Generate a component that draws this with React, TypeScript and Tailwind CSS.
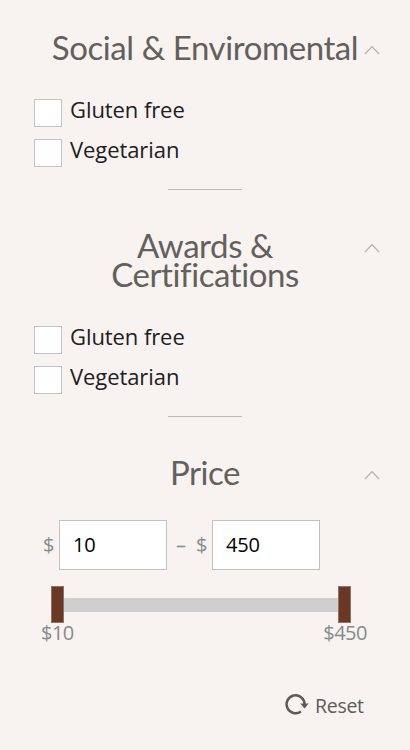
import React from "react";

function Chevron({ className }: { className: string }) {
  return (
    <svg className={`absolute right-[30px] h-[10px] w-[16px] ${className}`} viewBox="0 0 16 10" fill="none" stroke="#b3b0af" strokeWidth="1.2">
      <path d="M1 9 L8 1.6 L15 9" />
    </svg>
  );
}

function Heading({ children, chevron = "top-[12px]" }: { children: React.ReactNode; chevron?: string }) {
  return (
    <div className="relative">
      <h2 className="whitespace-nowrap text-center font-['Lato',sans-serif] text-[33px] leading-[29px] tracking-[-0.42px] text-[#62605d]">
        {children}
      </h2>
      <Chevron className={chevron} />
    </div>
  );
}

function Option({ label }: { label: string }) {
  return (
    <label className="flex h-7 items-start gap-2">
      <span className="h-7 w-7 border border-[#c6c2c4] bg-white" />
      <span className="text-[22px] leading-[21px] tracking-[-0.08px] text-[#20201e]">{label}</span>
    </label>
  );
}

function Options() {
  return (
    <div className="flex flex-col gap-3 pl-[34px]">
      <Option label="Gluten free" />
      <Option label="Vegetarian" />
    </div>
  );
}

function Divider() {
  return <div className="mx-auto h-px w-[74px] bg-[#bdbab6]" />;
}

function PriceField({ value }: { value: string }) {
  return (
    <div className="flex h-[50px] w-[108px] items-center border border-[#c4c1bf] bg-white pl-[13px] text-[20px] tracking-[-0.2px] text-black">
      {value}
    </div>
  );
}

export default function App() {
  return (
    <main className="h-[750px] w-[410px] overflow-hidden bg-[#f8f3f0] pt-[33px] font-['Open_Sans',sans-serif]">
      <section>
        <Heading>Social &amp; Enviromental</Heading>
        <div className="pt-[37px]">
          <Options />
        </div>
        <div className="pt-[22px]">
          <Divider />
        </div>
      </section>
      <section className="pt-[41px]">
        <Heading>
          Awards &amp;
          <br />
          Certifications
        </Heading>
        <div className="pt-[37px]">
          <Options />
        </div>
        <div className="pt-[22px]">
          <Divider />
        </div>
      </section>
      <section className="pt-[41px]">
        <Heading>Price</Heading>
        <div className="flex items-center pl-[43px] pt-[33px] text-[20px] text-[#858b8a]">
          <span className="w-[16px]">$</span>
          <PriceField value="10" />
          <span className="w-[29px] pl-[9px]">–</span>
          <span className="w-[16px]">$</span>
          <PriceField value="450" />
        </div>
        <div className="ml-[51px] mt-[16px] flex h-[37px] w-[300px] items-center">
          <span className="h-full w-[13px] border border-[#8d7469] bg-[#6a3926]" />
          <span className="h-[14px] flex-1 bg-[#d0cece]" />
          <span className="h-full w-[13px] border border-[#8d7469] bg-[#6a3926]" />
        </div>
        <div className="ml-[41px] flex w-[326px] justify-between text-[20px] leading-[20px] tracking-[-0.5px] text-[#858b8a]">
          <span>$10</span>
          <span>$450</span>
        </div>
      </section>
      <button className="ml-[285px] mt-[49px] flex items-center gap-[6px] text-[19.5px] leading-[28px] tracking-[-0.3px] text-[#5d5a58]">
        <svg className="mb-[4px] h-[22px] w-[24px]" viewBox="0 0 24 22" fill="none">
          <path d="M15.9 18.6 A9 9 0 1 1 19.6 11" stroke="#5d5a58" strokeWidth="2.5" />
          <path d="M15.2 10.6 H23.6 L19.6 15.4 Z" fill="#5d5a58" />
        </svg>
        <span>Reset</span>
      </button>
    </main>
  );
}
